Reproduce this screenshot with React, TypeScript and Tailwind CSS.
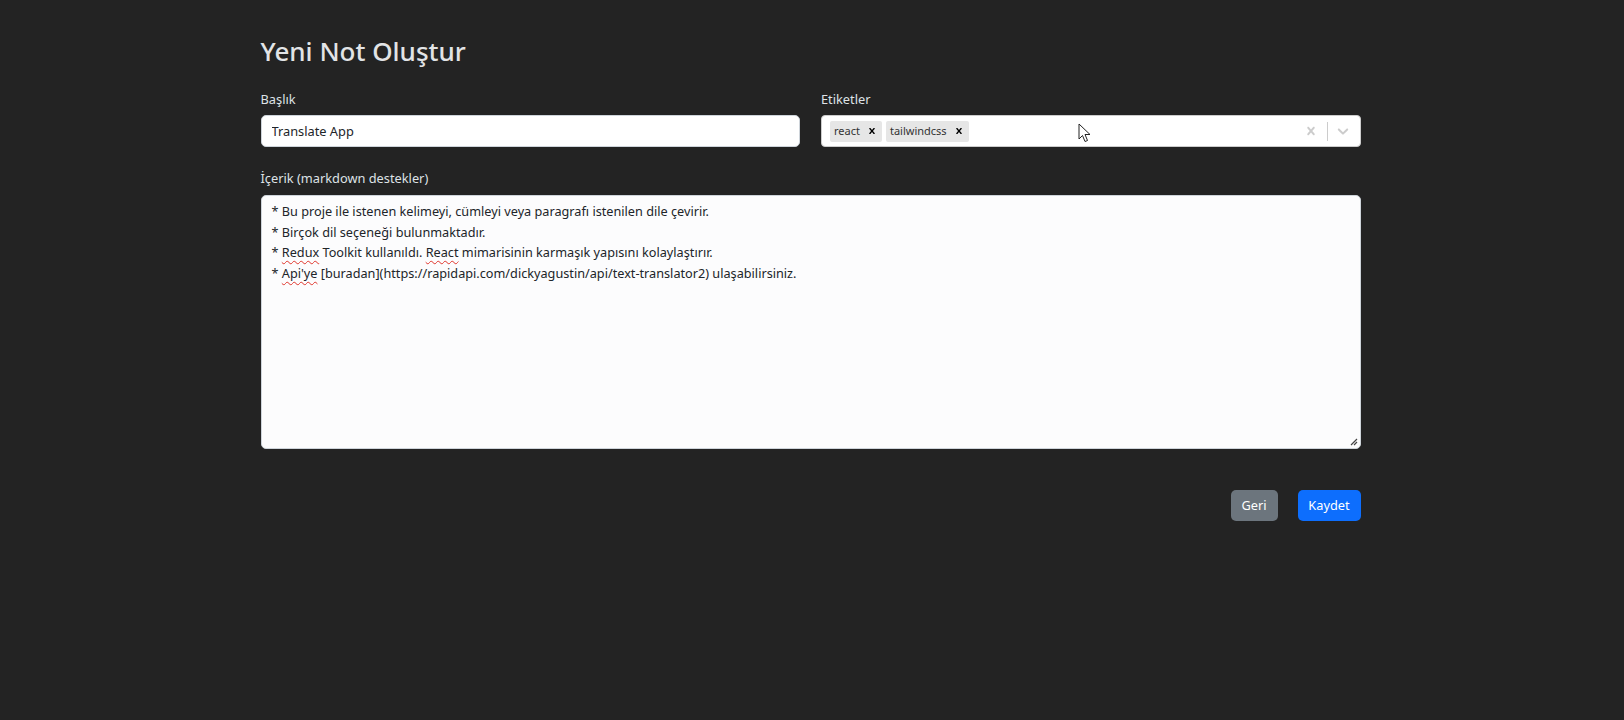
import { useState } from "react";

type Tag = { id: number; label: string };

const font = { fontFamily: '"Noto Sans", "Open Sans", Arial, sans-serif' };

function CrossIcon({ size = 10, className = "" }: { size?: number; className?: string }) {
  return (
    <svg width={size} height={size} viewBox="0 0 20 20" className={className} fill="currentColor">
      <path d="M14.348 14.849c-0.469 0.469-1.229 0.469-1.697 0l-2.651-3.030-2.651 3.029c-0.469 0.469-1.229 0.469-1.697 0-0.469-0.469-0.469-1.229 0-1.697l2.758-3.15-2.759-3.152c-0.469-0.469-0.469-1.228 0-1.697s1.228-0.469 1.697 0l2.652 3.031 2.651-3.031c0.469-0.469 1.228-0.469 1.697 0s0.469 1.229 0 1.697l-2.758 3.152 2.758 3.15c0.469 0.469 0.469 1.229 0 1.698z" />
    </svg>
  );
}

function ChevronIcon() {
  return (
    <svg width="18" height="18" viewBox="0 0 20 20" fill="currentColor">
      <path d="M4.516 7.548c0.436-0.446 1.043-0.481 1.576 0l3.908 3.747 3.908-3.747c0.533-0.481 1.141-0.446 1.574 0 0.436 0.445 0.408 1.197 0 1.615-0.406 0.418-4.695 4.502-4.695 4.502-0.217 0.223-0.502 0.335-0.787 0.335s-0.57-0.112-0.789-0.335c0 0-4.287-4.084-4.695-4.502s-0.436-1.17 0-1.615z" />
    </svg>
  );
}

function Spell({ children }: { children: string }) {
  return (
    <span className="underline decoration-wavy decoration-[#e0352b] decoration-[1px] underline-offset-[3px]">
      {children}
    </span>
  );
}

export default function App() {
  const [title, setTitle] = useState("Translate App");
  const [tags, setTags] = useState<Tag[]>([
    { id: 1, label: "react" },
    { id: 2, label: "tailwindcss" },
  ]);

  return (
    <div className="relative min-h-screen bg-[#232323] pr-[3px] text-[#dee2e6]" style={font}>
      <div className="mx-auto w-[1100px] pt-[36px]">
        <h2 className="mb-[22px] text-[26px] font-medium leading-[1.2] text-[#e2e4e6]">
          Yeni Not Oluştur
        </h2>

        <div className="grid grid-cols-2 gap-[21px]">
          <div>
            <label className="mb-[5px] block text-[12.8px] leading-[21px]">Başlık</label>
            <input
              type="text"
              value={title}
              onChange={(e) => setTitle(e.target.value)}
              className="block h-[32px] w-full rounded-[5px] border border-[#ced4da] bg-white px-[10px] text-[12.8px] text-[#212529] outline-none"
            />
          </div>
          <div>
            <label className="mb-[5px] block text-[12.8px] leading-[21px]">Etiketler</label>
            <div className="flex h-[32px] w-full items-center rounded-[4px] border border-[#cccccc] bg-white">
              <div className="flex flex-1 items-center gap-[4px] pl-[8px]">
                {tags.map((t) => (
                  <div key={t.id} className="flex h-[21px] items-center rounded-[2px] bg-[#e6e6e6]">
                    <span className="pl-[4px] pr-[2px] text-[11px] text-[#333333]">{t.label}</span>
                    <button
                      type="button"
                      onClick={() => setTags((prev) => prev.filter((x) => x.id !== t.id))}
                      className="flex h-full items-center px-[4px] text-[#000000]"
                    >
                      <CrossIcon size={12} />
                    </button>
                  </div>
                ))}
              </div>
              <div className="flex items-center pr-[8px]">
                <span className="px-[8px] text-[#cccccc]">
                  <CrossIcon size={16} />
                </span>
                <span className="h-[19px] w-px bg-[#cccccc]" />
                <span className="pl-[6px] text-[#cccccc]">
                  <ChevronIcon />
                </span>
              </div>
            </div>
          </div>
        </div>

        <div className="mt-[21px]">
          <label className="mb-[6px] block text-[12.8px] leading-[21px]">İçerik (markdown destekler)</label>
          <div className="relative h-[254px] w-full rounded-[5px] border border-[#ced4da] bg-[#fcfcfd] px-[10px] pt-[5px] text-[12.7px] leading-[20.5px] text-[#212529]">
            <div>* Bu proje ile istenen kelimeyi, cümleyi veya paragrafı istenilen dile çevirir.</div>
            <div>* Birçok dil seçeneği bulunmaktadır.</div>
            <div>
              * <Spell>Redux</Spell> Toolkit kullanıldı. <Spell>React</Spell> mimarisinin karmaşık yapısını
              kolaylaştırır.
            </div>
            <div>
              * <Spell>Api'ye</Spell> [buradan](https://rapidapi.com/dickyagustin/api/text-translator2) ulaşabilirsiniz.
            </div>
            <svg className="absolute bottom-[2px] right-[2px]" width="9" height="9" viewBox="0 0 9 9">
              <path d="M8 2 L2 8 M8 5 L5 8" stroke="#444" strokeWidth="1.2" />
            </svg>
          </div>
        </div>

        <div className="mt-[41px] flex justify-end gap-[20px]">
          <button
            type="button"
            className="flex h-[31px] w-[47px] items-center justify-center rounded-[5px] bg-[#6c757d] text-[12.8px] text-white"
          >
            Geri
          </button>
          <button
            type="button"
            className="flex h-[31px] w-[63px] items-center justify-center rounded-[5px] bg-[#0d6efd] text-[12.8px] text-white"
          >
            Kaydet
          </button>
        </div>
      </div>

      <svg className="absolute left-[1078px] top-[123px]" width="13" height="20" viewBox="0 0 13 20">
        <path d="M1 1 L1 16 L4.5 12.5 L7 18.5 L9.5 17.5 L7 11.5 L12 11.5 Z" fill="#ffffff" stroke="#222" strokeWidth="1" />
      </svg>
    </div>
  );
}
